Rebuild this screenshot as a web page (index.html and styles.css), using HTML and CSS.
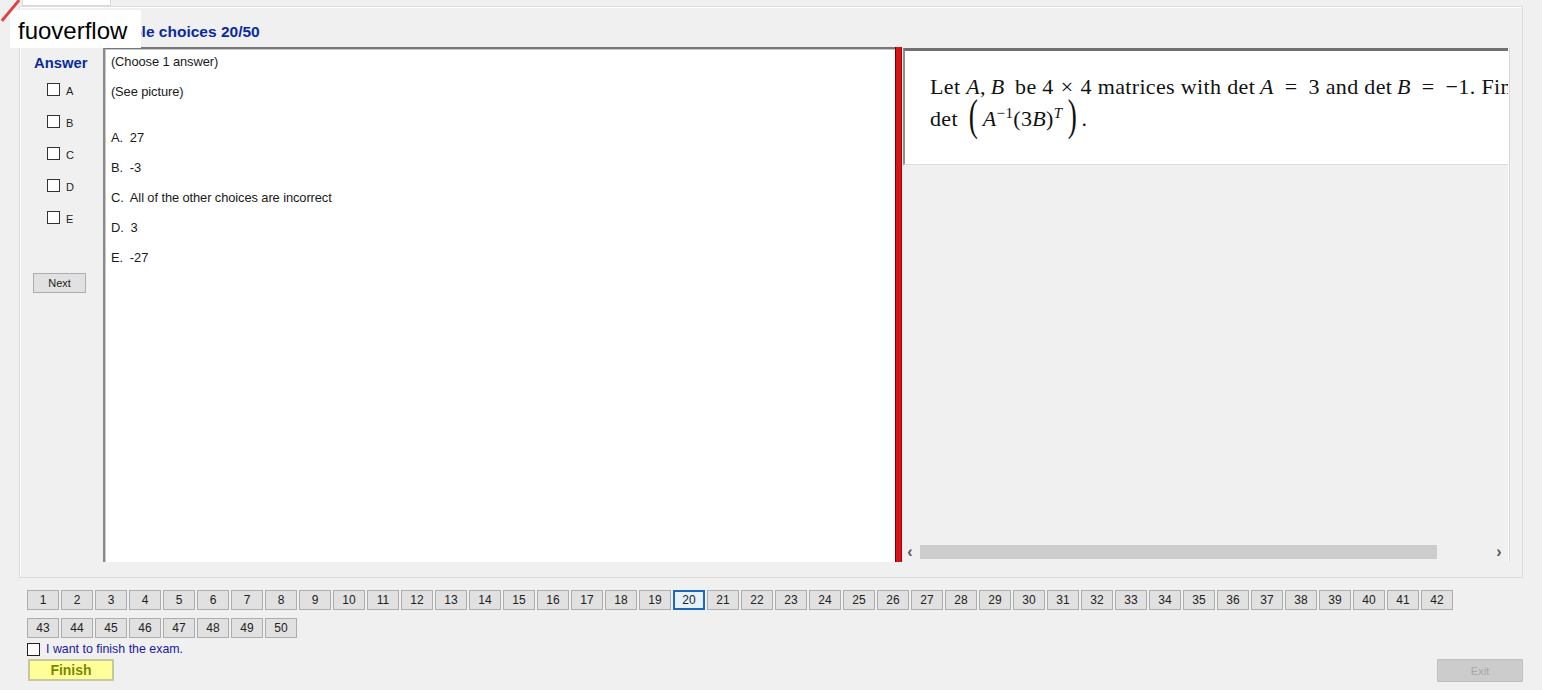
FILE: index.html
```html
<!DOCTYPE html>
<html>
<head>
<meta charset="utf-8">
<link rel="stylesheet" href="styles.css">
</head>
<body>
<div class="app">
  <div class="tabrow"><div class="tabstub"></div></div>
  <section class="group">
    <h1 class="title">Multiple choices 20/50</h1>
    <div class="content">
      <div class="answers">
        <div class="answer-head">Answer</div>
        <label class="opt"><span class="box"></span>A</label>
        <label class="opt"><span class="box"></span>B</label>
        <label class="opt"><span class="box"></span>C</label>
        <label class="opt"><span class="box"></span>D</label>
        <label class="opt"><span class="box"></span>E</label>
        <button class="btn next">Next</button>
      </div>
      <div class="question">
        <p class="q-line">(Choose 1 answer)</p>
        <p class="q-line">(See picture)</p>
        <p class="q-line gap">A.&nbsp; 27</p>
        <p class="q-line">B.&nbsp; -3</p>
        <p class="q-line">C.&nbsp; All of the other choices are incorrect</p>
        <p class="q-line">D.&nbsp; 3</p>
        <p class="q-line">E.&nbsp; -27</p>
      </div>
      <div class="splitter"></div>
      <div class="viewer">
        <div class="picture">
          <div class="math l1">Let <i>A</i>,&#8201;<i>B</i> &#8201;be 4<span class="op">×</span>4 matrices with det&#8201;<i>A</i><span class="eq">=</span>3 and det&#8201;<i>B</i><span class="eq">=</span>−1. Find</div>
          <div class="math l2">det <span class="big">(</span><i>A</i><sup>−1</sup>(3<i>B</i>)<sup><i>T</i></sup><span class="big">)</span>.</div>
        </div>
        <div class="viewer-fill"></div>
        <div class="hscroll">
          <span class="arr">&#8249;</span>
          <div class="track"><div class="thumb"></div></div>
          <span class="arr">&#8250;</span>
        </div>
      </div>
    </div>
  </section>
  <nav class="nums">
    <button class="num">1</button><button class="num">2</button><button class="num">3</button><button class="num">4</button><button class="num">5</button><button class="num">6</button><button class="num">7</button><button class="num">8</button><button class="num">9</button><button class="num">10</button><button class="num">11</button><button class="num">12</button><button class="num">13</button><button class="num">14</button><button class="num">15</button><button class="num">16</button><button class="num">17</button><button class="num">18</button><button class="num">19</button><button class="num active">20</button><button class="num">21</button><button class="num">22</button><button class="num">23</button><button class="num">24</button><button class="num">25</button><button class="num">26</button><button class="num">27</button><button class="num">28</button><button class="num">29</button><button class="num">30</button><button class="num">31</button><button class="num">32</button><button class="num">33</button><button class="num">34</button><button class="num">35</button><button class="num">36</button><button class="num">37</button><button class="num">38</button><button class="num">39</button><button class="num">40</button><button class="num">41</button><button class="num">42</button><button class="num">43</button><button class="num">44</button><button class="num">45</button><button class="num">46</button><button class="num">47</button><button class="num">48</button><button class="num">49</button><button class="num">50</button>
  </nav>
  <label class="finish-check"><span class="box"></span>I want to finish the exam.</label>
  <div class="actions">
    <button class="finish">Finish</button>
    <button class="exit" disabled>Exit</button>
  </div>
  <div class="watermark">fuoverflow</div>
  <div class="corner"></div>
</div>
</body>
</html>
```
FILE: styles.css
```css
* { box-sizing: border-box; }
html, body { margin: 0; padding: 0; }
body {
  background: #f0f0f0;
  font-family: "Liberation Sans", Arial, sans-serif;
  font-size: 12px;
  color: #000;
  width: 1542px;
  height: 690px;
  overflow: hidden;
}
.app {
  position: relative;
  height: 690px;
  display: flex;
  flex-direction: column;
}
.tabrow { height: 6px; display: flex; }
.tabstub {
  margin-left: 22px;
  width: 89px;
  height: 6px;
  background: #fff;
  border: 1px solid #d9d9d9;
  border-top: none;
}
.group {
  margin-left: 19px;
  width: 1504px;
  height: 572px;
  border: 1px solid #dcdcdc;
  box-shadow: inset 1px 1px 0 #fff;
  display: flex;
  flex-direction: column;
  padding: 0 13px 15px 0;
}
.title {
  margin: 0;
  height: 40px;
  padding: 16px 0 0 76px;
  font-size: 15.5px;
  line-height: 18px;
  font-weight: bold;
  color: #0a2a9c;
  white-space: nowrap;
}
.content {
  flex: 1;
  display: flex;
  min-height: 0;
}
.answers {
  width: 83px;
  display: flex;
  flex-direction: column;
  align-items: flex-start;
  padding: 8px 0 0 14px;
}
.answer-head {
  font-size: 14.8px;
  font-weight: bold;
  color: #0a2a9c;
  line-height: 17px;
  height: 21px;
}
.opt {
  display: flex;
  align-items: flex-start;
  gap: 6px;
  height: 32px;
  padding: 9px 0 0 13px;
  font-size: 11px;
  line-height: 12px;
  color: #222;
}
.box {
  width: 13px;
  height: 13px;
  border: 1px solid #333;
  background: #fff;
  flex: none;
}
.opt .box { margin-top: -2px; }
.btn {
  font-family: inherit;
  font-size: 11px;
  background: #e1e1e1;
  border: 1px solid #adadad;
  color: #222;
  padding: 0;
}
.next {
  margin-top: 37px;
  margin-left: -1px;
  width: 53px;
  height: 20px;
}
.question {
  width: 793px;
  background: #fff;
  border-top: 2px solid #777;
  border-left: 2px solid #8a8a8a;
  box-shadow: inset 1px 1px 0 #c8c8c8;
  padding: 6px 0 0 6px;
  overflow: hidden;
}
.q-line {
  margin: 0;
  height: 30px;
  line-height: 14px;
  font-size: 12.9px;
  letter-spacing: -0.1px;
  color: #1a1a1a;
  white-space: nowrap;
}
.q-line.gap { margin-top: 16px; }
.splitter {
  width: 7px;
  background: #d8141b;
  border-left: 1px solid #6a0000;
  border-right: 1px solid #a00;
}
.viewer {
  width: 607px;
  display: flex;
  flex-direction: column;
  border-right: 1px solid #fff;
  box-shadow: 1px 0 0 #d9d9d9;
  padding-left: 1px;
}
.picture {
  height: 117px;
  background: #fff;
  border-top: 3px solid #707070;
  border-left: 2px solid #909090;
  border-bottom: 1px solid #dcdcdc;
  margin-top: 1px;
  padding: 22px 0 0 25px;
  overflow: hidden;
  white-space: nowrap;
  font-family: "Liberation Serif", "Times New Roman", serif;
  font-size: 22px;
  letter-spacing: 0.35px;
  color: #111;
}
.math { line-height: 28px; white-space: nowrap; }
.math i { font-style: italic; }
.op { margin: 0 7px; }
.eq { margin: 0 11px; }
.l2 { height: 30px; line-height: 30px; }
.big {
  display: inline-block;
  font-size: 44px;
  line-height: 30px;
  vertical-align: -4px;
  margin: 0 2px;
  transform: scaleX(0.62);
}
.l2 sup { font-size: 15px; vertical-align: 8px; line-height: 0; }
.viewer-fill { flex: 1; }
.hscroll {
  height: 18px;
  margin-bottom: 1px;
  display: flex;
  align-items: center;
  padding: 0 2px 0 0;
  color: #555;
}
.arr { width: 14px; text-align: center; font-size: 16px; line-height: 16px; font-weight: bold; }
.track { flex: 1; height: 14px; padding-left: 3px; }
.thumb { width: 517px; height: 14px; background: #cdcdcd; }
.nums {
  display: flex;
  flex-wrap: wrap;
  gap: 8px 2px;
  padding: 12px 0 0 27px;
  width: 1470px;
}
.num {
  width: 32px;
  height: 20px;
  padding: 0;
  background: #e1e1e1;
  border: 1px solid #adadad;
  font-family: inherit;
  font-size: 12px;
  color: #222;
}
.num.active {
  border: 2px solid #1b6ab3;
  background: #e5f1fb;
}
.finish-check {
  display: flex;
  align-items: center;
  gap: 6px;
  padding-left: 27px;
  height: 18px;
  margin-top: 2px;
  font-size: 12.4px;
  color: #1a1aa0;
}
.finish-check .box { width: 13px; height: 13px; border-color: #222; }
.actions {
  display: flex;
  justify-content: space-between;
  padding: 1px 19px 0 28px;
}
.finish {
  width: 86px;
  height: 22px;
  background: #ffff99;
  border: 2px solid #c8c8a0;
  font-family: inherit;
  font-weight: bold;
  font-size: 14px;
  color: #7a8a00;
  padding: 0;
}
.exit {
  width: 86px;
  height: 23px;
  background: #cccccc;
  border: 1px solid #bfbfbf;
  font-family: inherit;
  font-size: 11px;
  color: #a8a8a8;
  padding: 0;
}
.watermark {
  position: absolute;
  left: 10px;
  top: 10px;
  width: 131px;
  height: 38px;
  background: #fff;
  font-family: "Liberation Sans", Arial, sans-serif;
  font-size: 24px;
  line-height: 24px;
  padding: 9px 0 0 8px;
  color: #000;
}
.corner {
  position: absolute;
  left: -3px;
  top: 9px;
  width: 27px;
  height: 3px;
  background: #e04040;
  transform: rotate(-50deg);
}
```
